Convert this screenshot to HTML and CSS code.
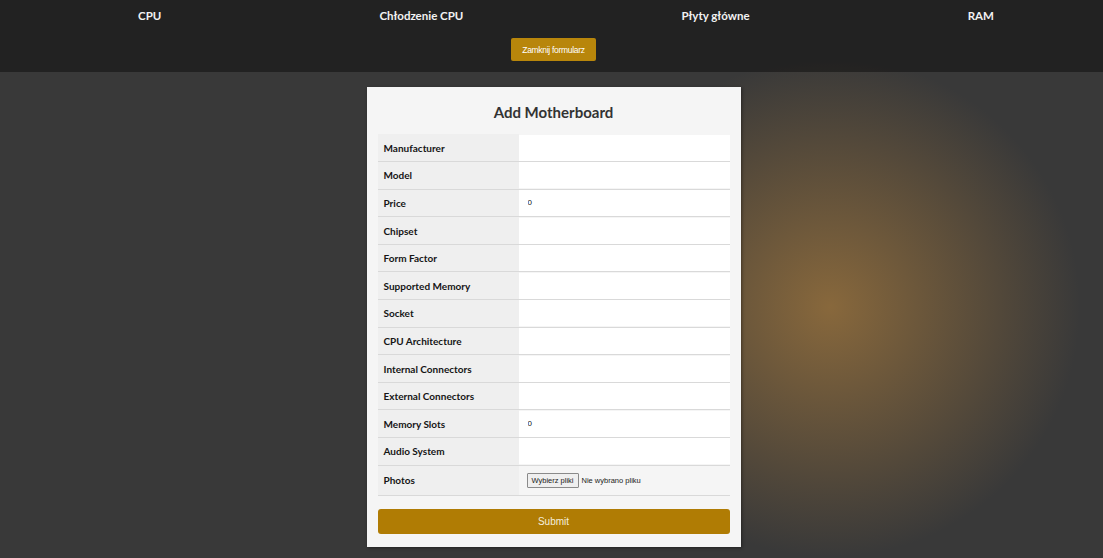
FILE: index.html
```html
<!DOCTYPE html>
<html lang="pl">
<head>
<meta charset="utf-8">
<title>Add Motherboard</title>
<link rel="stylesheet" href="styles.css">
</head>
<body>
<header class="topbar">
  <nav class="nav">
    <a class="nav-link" href="#">CPU</a>
    <a class="nav-link" href="#">Chłodzenie CPU</a>
    <a class="nav-link" href="#">Płyty główne</a>
    <a class="nav-link" href="#">RAM</a>
  </nav>
  <div class="topbar-actions">
    <button class="btn-close" type="button">Zamknij formularz</button>
  </div>
</header>
<main class="main">
  <form class="card">
    <h2 class="card-title">Add Motherboard</h2>
    <table class="form-table">
      <tr><th>Manufacturer</th><td><input class="field" type="text"></td></tr>
      <tr><th>Model</th><td><input class="field" type="text"></td></tr>
      <tr><th>Price</th><td><input class="field" type="number" value="0"></td></tr>
      <tr><th>Chipset</th><td><input class="field" type="text"></td></tr>
      <tr><th>Form Factor</th><td><input class="field" type="text"></td></tr>
      <tr><th>Supported Memory</th><td><input class="field" type="text"></td></tr>
      <tr><th>Socket</th><td><input class="field" type="text"></td></tr>
      <tr><th>CPU Architecture</th><td><input class="field" type="text"></td></tr>
      <tr><th>Internal Connectors</th><td><input class="field" type="text"></td></tr>
      <tr><th>External Connectors</th><td><input class="field" type="text"></td></tr>
      <tr><th>Memory Slots</th><td><input class="field" type="number" value="0"></td></tr>
      <tr><th>Audio System</th><td><input class="field" type="text"></td></tr>
      <tr class="row-photos"><th>Photos</th><td><span class="file"><span class="file-btn">Wybierz pliki</span><span class="file-name">Nie wybrano pliku</span></span></td></tr>
    </table>
    <button class="btn-submit" type="button">Submit</button>
  </form>
</main>
</body>
</html>
```

FILE: styles.css
```css
* { box-sizing: border-box; }
html, body { height: 100%; }
body {
  margin: 0;
  font-family: "Lato", "Liberation Sans", sans-serif;
  background-color: #393939;
  background-image: radial-gradient(circle 250px at 830px 307px, #88683c 0%, rgba(57,57,57,0) 100%);
  min-height: 558px;
}
.topbar {
  height: 72px;
  background: rgba(0,0,0,0.4);
  display: flex;
  flex-direction: column;
}
.nav {
  display: flex;
  justify-content: space-around;
  padding: 8px 0 0 29px;
  height: 30px;
}
.nav-link {
  color: #f2f2f2;
  text-decoration: none;
  font-weight: 700;
  font-size: 11.5px;
  line-height: 16px;
}
.topbar-actions {
  display: flex;
  justify-content: center;
  padding: 8px 0 0 4px;
}
.btn-close {
  background: #b8860b;
  color: #fff;
  border: none;
  border-radius: 2px;
  width: 85px;
  height: 23px;
  font-family: "Liberation Sans", sans-serif;
  font-size: 8.5px;
  letter-spacing: -0.3px;
  padding: 0;
}
.main {
  display: flex;
  justify-content: center;
  padding: 15px 0 0 4px;
}
.card {
  width: 374px;
  background: #f5f5f5;
  padding: 12px 11px 13px;
  box-shadow: 1px 1px 3px rgba(0,0,0,0.4);
}
.card-title {
  margin: 2px 0 10px;
  text-align: center;
  font-size: 15px;
  line-height: 23px;
  color: #333;
  font-weight: 700;
}
.form-table {
  width: 352px;
  border-collapse: collapse;
  table-layout: fixed;
}
.form-table th {
  width: 141px;
  background: #efefef;
  text-align: left;
  font-weight: 700;
  font-size: 10px;
  color: #151515;
  padding: 0 0 0 6px;
  height: 27.6px;
  border-bottom: 1px solid #d9d9d9;
}
.form-table td {
  padding: 0;
  height: 27.6px;
  border-bottom: 1px solid #d9d9d9;
  background: #f5f5f5;
}
.field {
  display: block;
  width: 100%;
  height: 26px;
  border: none;
  background: #fff;
  padding: 0 9px;
  font-family: "Liberation Sans", sans-serif;
  font-size: 8px;
  color: #111;
  outline: none;
}
.field::-webkit-inner-spin-button { display: none; }
.row-photos th, .row-photos td { height: 30px; }
.file {
  display: flex;
  align-items: center;
  padding-left: 8px;
  font-family: "Liberation Sans", sans-serif;
  font-size: 7.5px;
  color: #222;
}
.file-btn {
  border: 1px solid #8a8a8a;
  background: #efefef;
  padding: 2px 4px;
  border-radius: 1px;
  margin-right: 3px;
}
.btn-submit {
  display: block;
  width: 352px;
  height: 25px;
  margin-top: 13px;
  background: #b07c04;
  color: #f4eedc;
  border: none;
  border-radius: 3px;
  font-family: "Liberation Sans", sans-serif;
  font-size: 10px;
}
```
